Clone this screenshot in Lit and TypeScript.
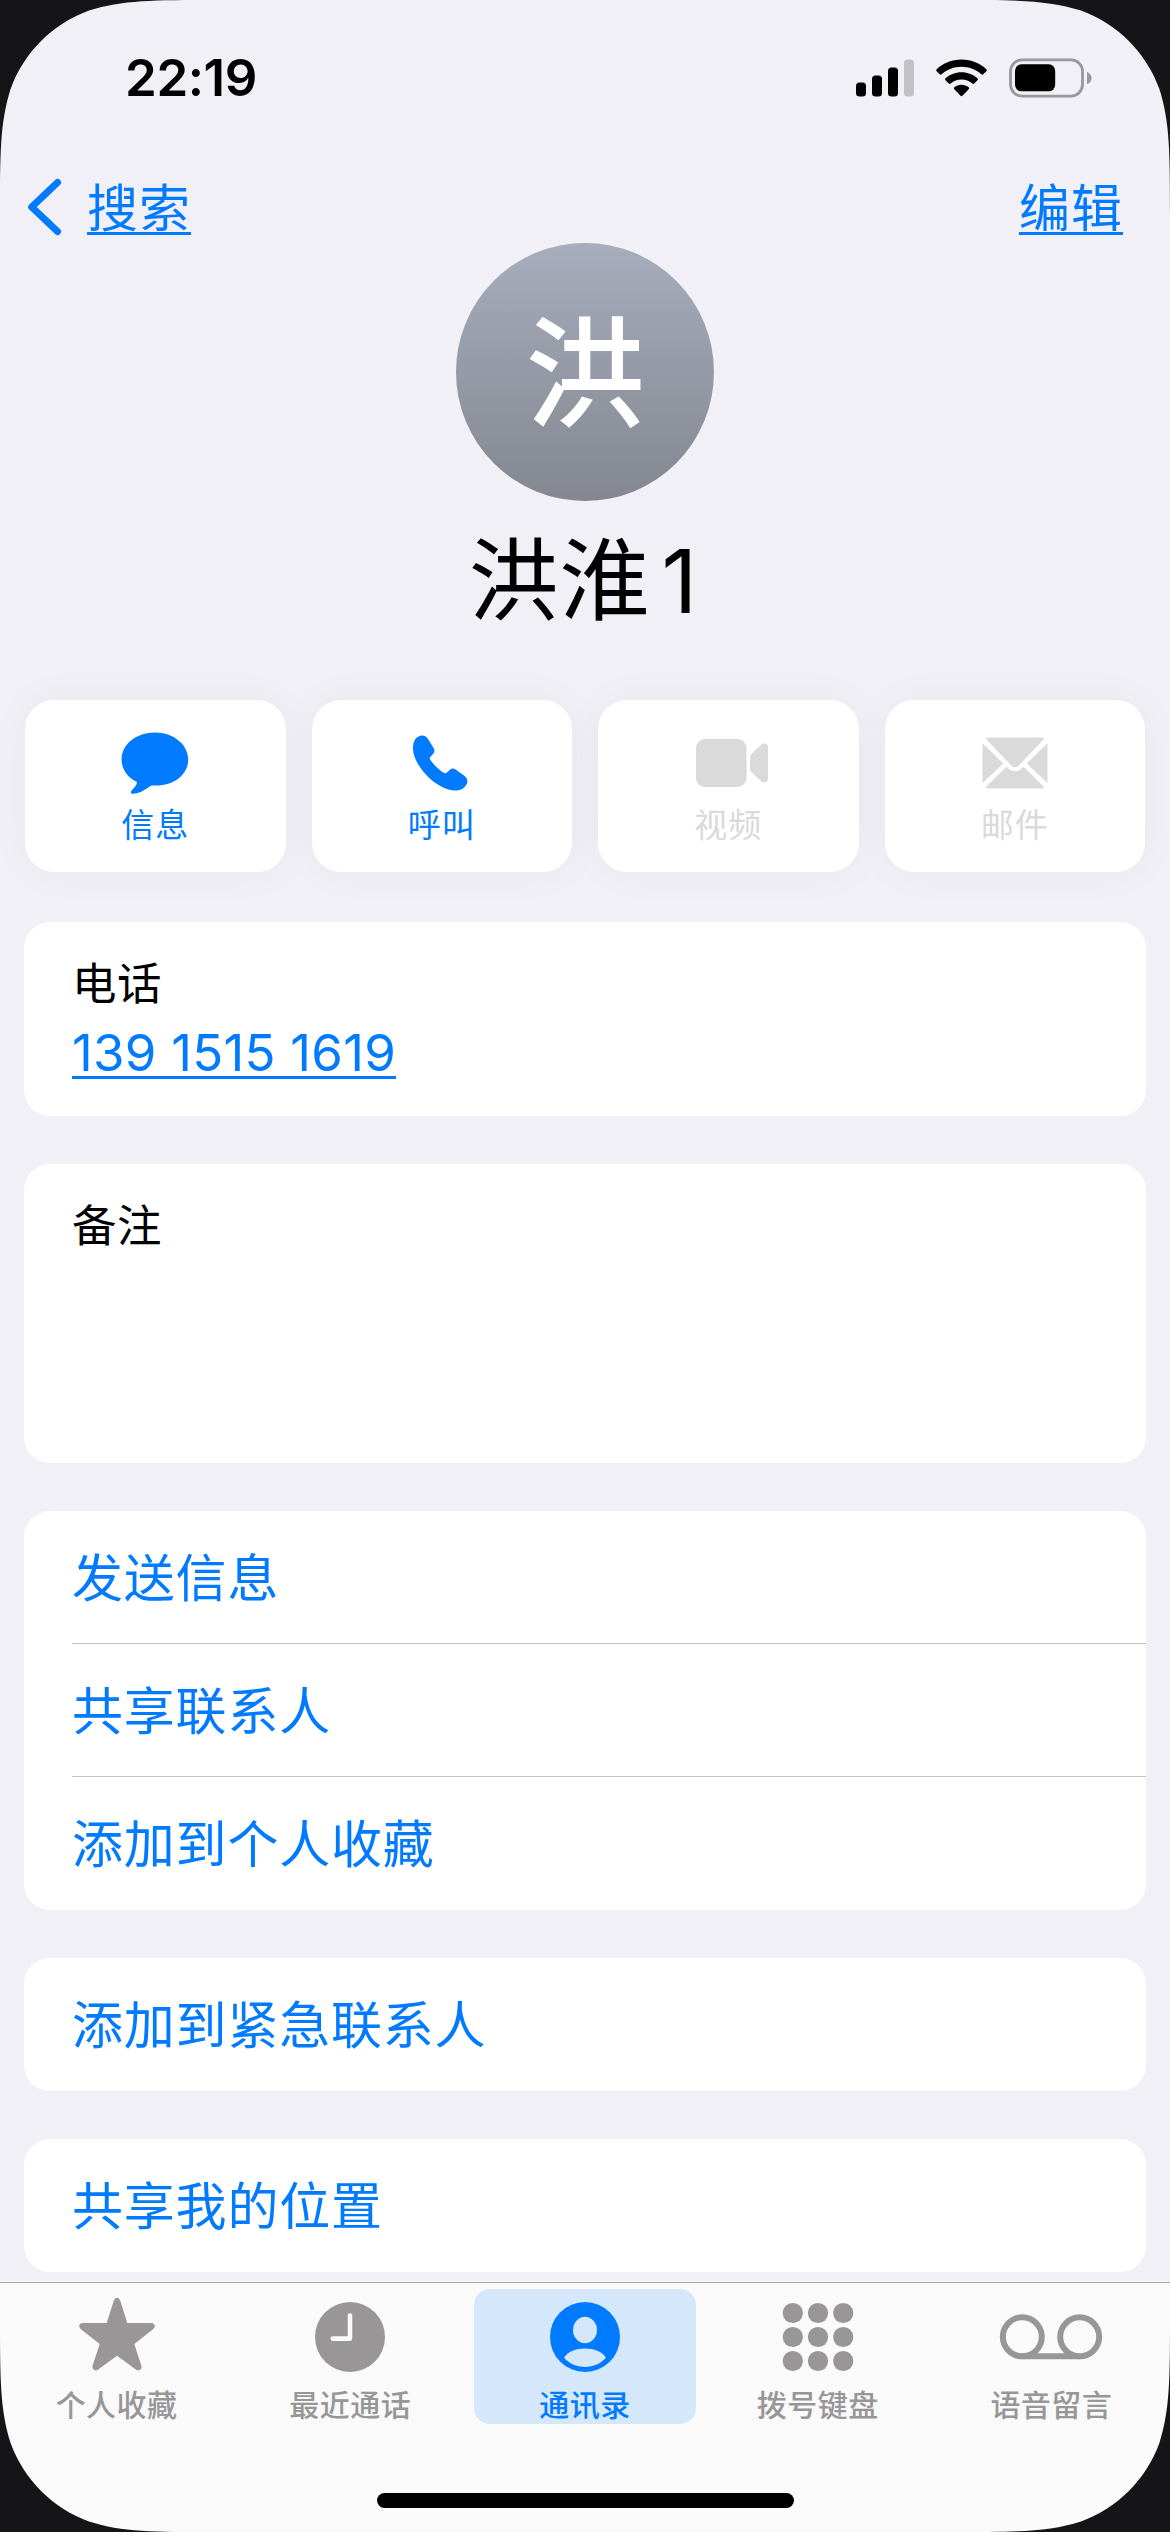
import { LitElement, html, svg, css, nothing } from "lit";
import { customElement, property } from "lit/decorators.js";
import { classMap } from "lit/directives/class-map.js";

const messageIcon = html`<svg width="68" height="62" viewBox="0 0 68 62" fill="currentColor">
  <path d="M34 .5C52.500 .5 67.200 12.500 67.200 27.500C67.200 42 54 53.500 35 53.500C32.500 53.400 31 53.300 29.500 54C24 58 18.500 61.200 12.500 61.800C9.800 62 9.200 60.200 10.600 58.500C13 55.800 15.800 53.500 16 50C6 45 .6 37 .6 27.500C.6 12 15.500 .5 34 .5Z" />
</svg>`;

const phoneIcon = html`<svg class="phone" width="56" height="56" viewBox="0 0 56 56" fill="currentColor">
  <path d="M1 13.500C1 5 5 .8 10 .6C12.800 .5 14.600 1.800 15.800 3.800L21.600 13C22.900 15.100 22.700 16.900 21.200 18.700L18.300 21.900C17.600 22.700 17.600 23.700 18.200 24.600C21.500 29.700 27.300 35.500 32.200 37.900C33.200 38.400 34.100 38.400 34.900 37.600L37.700 34.900C39.500 33.200 41.500 33 43.600 34.400L52.300 40.800C55.300 43 56 46 54.700 49C52.500 53.500 48.500 55.500 43.500 55.500C33.500 55.500 21 48 13 38.500C5.500 30 1 21 1 13.500Z" />
</svg>`;

const videoIcon = html`<svg class="video" width="72" height="48" viewBox="0 0 72 48" fill="currentColor">
  <rect width="50.500" height="48" rx="9" />
  <path d="M54 18.500Q54 16 56 14.200L65.500 5.600Q67.300 4.100 69.300 4.600Q72 5.300 72 8.200V39.800Q72 42.700 69.300 43.400Q67.300 43.900 65.500 42.400L56 33.800Q54 32 54 29.500Z" />
</svg>`;

const mailIcon = html`<svg width="66" height="52" viewBox="0 0 66 52" fill="currentColor">
  <path d="M3.500 1.500Q5 .5 7 .5H59Q61 .5 62.500 1.500L36.800 28.500Q33 32 29.200 28.500Z" />
  <path d="M.5 6.200L21.300 26.500L.5 46Z" />
  <path d="M65.500 6.200L44.700 26.500L65.500 46Z" />
  <path d="M24.500 29.700L26.600 31.700Q33 37 39.400 31.700L41.500 29.700L62.500 50.500Q61 51.500 59 51.500H7Q5 51.500 3.500 50.500Z" />
</svg>`;

const starIcon = html`<svg width="78" height="74" viewBox="0 0 78 74" fill="currentColor">
  <path d="M35.900 3.300Q39 -1.600 42.100 3.300L49.300 26H73Q77 26.300 76.800 29.300Q76.700 31 75 32.300L56.300 47L63.400 68.800Q64 71.500 62 72.800Q60 74 57.800 72.400L39 58.700L20.200 72.400Q18 74 16 72.800Q14 71.500 14.600 68.800L21.700 47L3 32.300Q1.300 31 1.200 29.300Q1 26.300 5 26H28.700Z" />
</svg>`;

const clockIcon = html`<svg width="70" height="70" viewBox="0 0 70 70">
  <circle cx="35" cy="35" r="35" fill="currentColor" />
  <path d="M35 13.500V36.600H17.800" fill="none" stroke="#fafafa" stroke-width="4.600" stroke-linecap="round" stroke-linejoin="round" />
</svg>`;

const personIcon = html`<svg width="70" height="70" viewBox="0 0 70 70">
  <circle cx="35" cy="35" r="35" fill="currentColor" />
  <ellipse cx="35" cy="28" rx="12" ry="13.200" fill="#d5e7fb" />
  <path d="M14 55.500C18 49.500 26 46.500 35 46.500C44 46.500 52 49.500 56 55.500C51 61.500 43.500 65 35 65C26.500 65 19 61.500 14 55.500Z" fill="#d5e7fb" />
</svg>`;

const keypadIcon = html`<svg width="72" height="70" viewBox="0 0 72 70" fill="currentColor">
  ${[11, 35, 59].map((y) =>
    [10.8, 36, 61.2].map((x) => svg`<circle cx=${x} cy=${y} r="10.1" />`)
  )}
</svg>`;

const voicemailIcon = html`<svg width="104" height="46" viewBox="0 0 104 46" fill="none" stroke="currentColor" stroke-width="6">
  <circle cx="23.300" cy="22.800" r="19.500" />
  <circle cx="80.700" cy="22.800" r="19.500" />
  <path d="M23.300 42.300H80.700" />
</svg>`;

const cornerPath =
  "M0 0H215.500C153.500 0 122.400 0 89 10.600C52.600 23.800 23.800 52.600 10.600 89C0 122.400 0 153.500 0 215.500Z";

@customElement("status-bar")
class StatusBar extends LitElement {
  static styles = css`
    :host {
      display: flex;
      align-items: center;
      justify-content: space-between;
      height: 156px;
      padding: 0 78px 0 125px;
      box-sizing: border-box;
    }
    .time {
      font-size: 51px;
      font-weight: 600;
      line-height: 60px;
      letter-spacing: -0.4px;
    }
    .icons {
      display: flex;
      align-items: center;
    }
    .wifi {
      margin: 0 22px;
    }
  `;

  render() {
    return html`
      <span class="time">22:19</span>
      <span class="icons">
        <svg width="58" height="38" viewBox="0 0 58 38">
          <rect x="0" y="23.500" width="10" height="14" rx="3.500" />
          <rect x="16" y="16.500" width="10" height="21" rx="3.500" />
          <rect x="32" y="8.500" width="10" height="29" rx="3.500" />
          <rect x="48" y=".5" width="10" height="37" rx="3.500" fill="#c2c1c6" />
        </svg>
        <svg class="wifi" width="51" height="38" viewBox="0 0 51 38">
          <path d="M25.500 .5C35.500 .5 44 4.400 50.300 10.200Q51.300 11.200 50.300 12.200L47.200 15.300Q46.300 16.200 45.300 15.300C39.800 10.400 33 7.700 25.500 7.700C18 7.700 11.200 10.400 5.700 15.300Q4.700 16.200 3.800 15.300L.7 12.200Q-.3 11.200 .7 10.200C7 4.400 15.500 .5 25.500 .5Z" />
          <path d="M25.500 13.200C31.800 13.200 37.300 15.500 41.500 19.300Q42.500 20.300 41.500 21.300L38.200 24.500Q37.300 25.400 36.300 24.500C33.300 21.900 29.600 20.400 25.500 20.400C21.400 20.400 17.700 21.900 14.700 24.500Q13.700 25.400 12.800 24.500L9.500 21.300Q8.500 20.300 9.500 19.300C13.700 15.500 19.200 13.200 25.500 13.200Z" />
          <path d="M25.500 25.700C28.300 25.700 30.800 26.700 32.700 28.300Q33.700 29.200 32.700 30.200L26.400 36.800Q25.500 37.700 24.600 36.800L18.300 30.200Q17.300 29.200 18.300 28.300C20.200 26.700 22.700 25.700 25.500 25.700Z" />
        </svg>
        <svg width="83" height="40" viewBox="0 0 83 40">
          <rect x="1.500" y="1.900" width="72" height="36.200" rx="11.500" fill="none" stroke="#98979d" stroke-width="2.800" />
          <rect x="6" y="6.300" width="40.200" height="27" rx="6.500" />
          <path d="M78 13.700C84 16.500 84 24 78 26.300Z" fill="#98979d" />
        </svg>
      </span>
    `;
  }
}

@customElement("action-tile")
class ActionTile extends LitElement {
  @property() label = "";
  @property({ attribute: false }) icon: unknown = nothing;

  static styles = css`
    :host {
      display: flex;
      flex-direction: column;
      align-items: center;
      height: 172px;
      padding-top: 32px;
      box-sizing: border-box;
      border-radius: 29px;
      background: #fff;
      box-shadow: 0 0 44px rgba(0, 0, 20, 0.04);
      color: #007aff;
    }
    :host([disabled]) {
      color: #dadada;
    }
    .icon {
      display: flex;
      align-items: center;
      height: 62px;
    }
    .phone {
      margin-right: 4px;
    }
    .video {
      margin-left: 7px;
    }
    .label {
      margin-top: 10px;
      font-size: 33px;
      line-height: 42px;
      letter-spacing: 1px;
    }
  `;

  render() {
    return html`<span class="icon">${this.icon}</span><span class="label">${this.label}</span>`;
  }
}

@customElement("tab-bar")
class TabBar extends LitElement {
  static styles = css`
    :host {
      display: flex;
      flex-direction: column;
      align-items: center;
      justify-content: space-between;
      flex: none;
      height: 250px;
      box-sizing: border-box;
      border-top: 1px solid #a9a8ac;
      background: #fafafa;
      padding: 6px 0 24px;
    }
    .tabs {
      display: flex;
      gap: 11.7px;
    }
    .tab {
      display: flex;
      flex-direction: column;
      align-items: center;
      width: 222px;
      height: 135px;
      padding-right: 2px;
      box-sizing: border-box;
      border-radius: 16px;
      color: #989697;
    }
    .selected {
      padding-right: 0;
      background: #d5e7fb;
      color: #007aff;
    }
    .icon {
      display: flex;
      align-items: center;
      height: 100px;
    }
    .raised {
      padding-bottom: 5px;
      box-sizing: border-box;
    }
    .label {
      margin-top: 1.5px;
      font-size: 30px;
      font-weight: 500;
      line-height: 38px;
      letter-spacing: 0.5px;
    }
    .home {
      width: 417px;
      height: 15px;
      border-radius: 8px;
      background: #000;
    }
  `;

  private tabs = [
    { label: "个人收藏", icon: starIcon, raised: true },
    { label: "最近通话", icon: clockIcon },
    { label: "通讯录", icon: personIcon, selected: true },
    { label: "拨号键盘", icon: keypadIcon },
    { label: "语音留言", icon: voicemailIcon },
  ];

  render() {
    return html`
      <div class="tabs">
        ${this.tabs.map(
          (t) => html`<div class=${classMap({ tab: true, selected: !!t.selected })}>
            <span class=${classMap({ icon: true, raised: !!t.raised })}>${t.icon}</span>
            <span class="label">${t.label}</span>
          </div>`
        )}
      </div>
      <div class="home"></div>
    `;
  }
}

@customElement("app-root")
class AppRoot extends LitElement {
  static styles = css`
    :host {
      display: flex;
      flex-direction: column;
      position: relative;
      width: 1170px;
      height: 2532px;
      overflow: hidden;
      background: #f1f0f6;
      color: #000;
      font-family: "Inter", "Noto Sans CJK SC", sans-serif;
    }
    .nav {
      display: flex;
      align-items: center;
      justify-content: space-between;
      height: 87px;
      padding: 15px 47px 0 26px;
      box-sizing: border-box;
    }
    .back {
      display: flex;
      align-items: center;
      gap: 23px;
    }
    .link {
      margin-top: 3px;
      color: #007aff;
      font-size: 51px;
      line-height: 60px;
      letter-spacing: 1px;
      text-decoration: underline;
      text-decoration-thickness: 3px;
      text-underline-offset: 5px;
      text-decoration-skip-ink: none;
    }
    .number {
      margin-top: 0;
      letter-spacing: 0.25px;
    }
    .profile {
      display: flex;
      flex-direction: column;
      align-items: center;
    }
    .avatar {
      display: flex;
      align-items: center;
      justify-content: center;
      width: 258px;
      height: 258px;
      padding-top: 5px;
      box-sizing: border-box;
      border-radius: 50%;
      background: linear-gradient(#a6adbc, #848790);
      color: #fff;
      font-size: 120px;
      font-weight: 500;
      line-height: 120px;
    }
    .name {
      margin: 25px 0 64px;
      padding-right: 3px;
      font-size: 90px;
      line-height: 110px;
      letter-spacing: 1px;
    }
    .name-digit {
      padding-left: 11px;
      font-size: 88px;
    }
    .actions {
      display: grid;
      grid-template-columns: repeat(4, 1fr);
      gap: 26px;
      padding: 0 25px;
      margin-bottom: 50px;
    }
    .cards {
      display: flex;
      flex-direction: column;
      gap: 48px;
      padding: 0 24px;
      flex: 1;
      min-height: 0;
    }
    .card {
      display: flex;
      flex-direction: column;
      flex: none;
      border-radius: 26px;
      background: #fff;
      padding-left: 48px;
    }
    .phone {
      height: 194px;
      padding-top: 33.5px;
      box-sizing: border-box;
      align-items: flex-start;
      gap: 11px;
    }
    .notes {
      height: 299px;
      padding-top: 33.5px;
      box-sizing: border-box;
    }
    .caption {
      font-size: 44.5px;
      line-height: 56px;
      letter-spacing: 0.4px;
    }
    .row {
      height: 133px;
      padding-top: 3px;
      box-sizing: border-box;
      color: #007aff;
      font-size: 51px;
      line-height: 130px;
      letter-spacing: 0.8px;
    }
    .row:not(:last-child) {
      border-bottom: 1px solid #c4c4c6;
      line-height: 129px;
    }
    .corner {
      position: absolute;
      width: 216px;
      height: 216px;
      fill: #151518;
    }
    .tl {
      top: 0;
      left: 0;
    }
    .tr {
      top: 0;
      right: 0;
      transform: scaleX(-1);
    }
    .bl {
      bottom: 0;
      left: 0;
      transform: scaleY(-1);
    }
    .br {
      bottom: 0;
      right: 0;
      transform: scale(-1);
    }
  `;

  private groups = [
    ["发送信息", "共享联系人", "添加到个人收藏"],
    ["添加到紧急联系人"],
    ["共享我的位置"],
  ];

  render() {
    return html`
      <status-bar></status-bar>
      <div class="nav">
        <span class="back">
          <svg width="38" height="58" viewBox="0 0 38 58" fill="none" stroke="#007aff" stroke-width="7" stroke-linecap="round" stroke-linejoin="round">
            <path d="M31.500 4.500L5.700 29L31.500 53.500" />
          </svg>
          <span class="link">搜索</span>
        </span>
        <span class="link">编辑</span>
      </div>
      <div class="profile">
        <div class="avatar">洪</div>
        <div class="name">洪淮<span class="name-digit">1</span></div>
      </div>
      <div class="actions">
        <action-tile label="信息" .icon=${messageIcon}></action-tile>
        <action-tile label="呼叫" .icon=${phoneIcon}></action-tile>
        <action-tile disabled label="视频" .icon=${videoIcon}></action-tile>
        <action-tile disabled label="邮件" .icon=${mailIcon}></action-tile>
      </div>
      <div class="cards">
        <div class="card phone">
          <span class="caption">电话</span>
          <span class="link number">139 1515 1619</span>
        </div>
        <div class="card notes"><span class="caption">备注</span></div>
        ${this.groups.map(
          (rows) => html`<div class="card">${rows.map((r) => html`<div class="row">${r}</div>`)}</div>`
        )}
      </div>
      <tab-bar></tab-bar>
      ${["tl", "tr", "bl", "br"].map(
        (c) => html`<svg class="corner ${c}" viewBox="0 0 216 216"><path d=${cornerPath} /></svg>`
      )}
    `;
  }
}
